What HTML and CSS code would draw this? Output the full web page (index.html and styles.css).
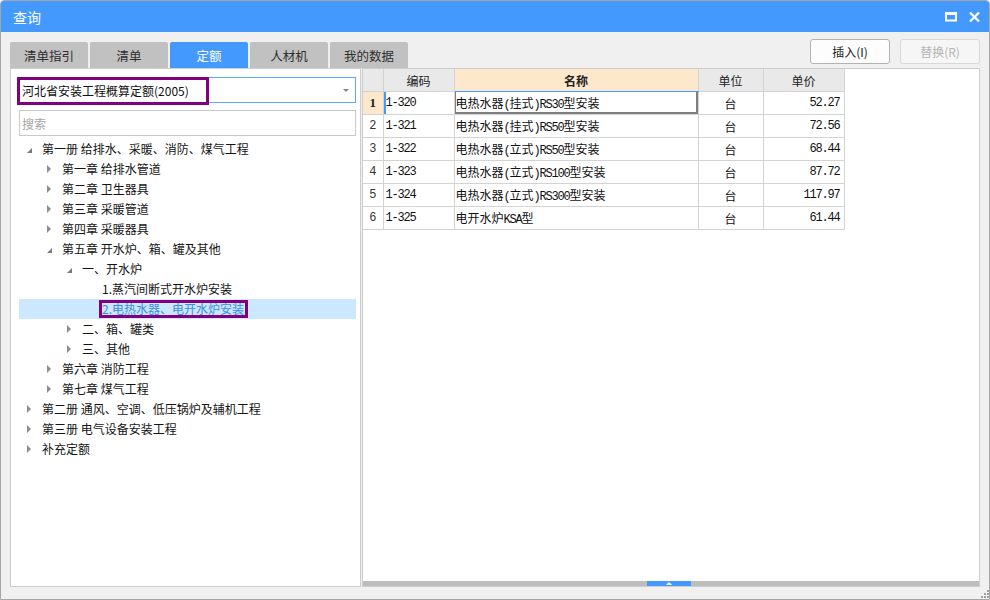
FILE: index.html
```html
<!DOCTYPE html>
<html lang="zh-CN">
<head>
<meta charset="utf-8">
<title>查询</title>
<link rel="stylesheet" href="styles.css">
</head>
<body>
<div class="window">
  <div class="titlebar">
    <span class="title">查询</span>
    <div class="wbtns">
      <svg class="ico-max" width="12" height="10" viewBox="0 0 12 10"><rect x="1" y="1.5" width="10" height="7" fill="none" stroke="#fff" stroke-width="2"/><rect x="0" y="0" width="12" height="3" fill="#fff"/></svg>
      <svg class="ico-close" width="11" height="10" viewBox="0 0 11 10"><path d="M1 0.5 L10 9.5 M10 0.5 L1 9.5" stroke="#fff" stroke-width="2.2" fill="none"/></svg>
    </div>
  </div>

  <div class="toolbar">
    <div class="tabs">
      <div class="tab">清单指引</div>
      <div class="tab">清单</div>
      <div class="tab active">定额</div>
      <div class="tab">人材机</div>
      <div class="tab">我的数据</div>
    </div>
    <div class="actions">
      <button class="btn">插入(I)</button>
      <button class="btn disabled">替换(R)</button>
    </div>
  </div>

  <div class="panels">
    <div class="left">
      <div class="combo">
        <span class="combo-text">河北省安装工程概算定额(2005)</span>
        <span class="combo-arrow"></span>
      </div>
      <div class="search">搜索</div>
      <div class="tree">
        <div class="node l0"><span class="tw exp"></span><span class="tx">第一册 给排水、采暖、消防、煤气工程</span></div>
        <div class="node l1"><span class="tw col"></span><span class="tx">第一章 给排水管道</span></div>
        <div class="node l1"><span class="tw col"></span><span class="tx">第二章 卫生器具</span></div>
        <div class="node l1"><span class="tw col"></span><span class="tx">第三章 采暖管道</span></div>
        <div class="node l1"><span class="tw col"></span><span class="tx">第四章 采暖器具</span></div>
        <div class="node l1"><span class="tw exp"></span><span class="tx">第五章 开水炉、箱、罐及其他</span></div>
        <div class="node l2"><span class="tw exp"></span><span class="tx">一、开水炉</span></div>
        <div class="node l3"><span class="tw"></span><span class="tx">1.蒸汽间断式开水炉安装</span></div>
        <div class="node l3 sel"><span class="tw"></span><span class="tx mark">2.电热水器、电开水炉安装</span></div>
        <div class="node l2"><span class="tw col"></span><span class="tx">二、箱、罐类</span></div>
        <div class="node l2"><span class="tw col"></span><span class="tx">三、其他</span></div>
        <div class="node l1"><span class="tw col"></span><span class="tx">第六章 消防工程</span></div>
        <div class="node l1"><span class="tw col"></span><span class="tx">第七章 煤气工程</span></div>
        <div class="node l0"><span class="tw col"></span><span class="tx">第二册 通风、空调、低压锅炉及辅机工程</span></div>
        <div class="node l0"><span class="tw col"></span><span class="tx">第三册 电气设备安装工程</span></div>
        <div class="node l0"><span class="tw col"></span><span class="tx">补充定额</span></div>
      </div>
    </div>

    <div class="right">
      <div class="grid-area">
        <table class="grid">
          <colgroup>
            <col class="c-no"><col class="c-code"><col class="c-name"><col class="c-unit"><col class="c-price">
          </colgroup>
          <thead>
            <tr><th></th><th>编码</th><th class="hl">名称</th><th>单位</th><th>单价</th></tr>
          </thead>
          <tbody>
            <tr class="cur"><td class="no">1</td><td class="code">1-320</td><td class="name">电热水器<span class="m">(</span>挂式<span class="m">)RS30</span>型安装</td><td class="unit">台</td><td class="price">52.27</td></tr>
            <tr><td class="no">2</td><td class="code">1-321</td><td class="name">电热水器<span class="m">(</span>挂式<span class="m">)RS50</span>型安装</td><td class="unit">台</td><td class="price">72.56</td></tr>
            <tr><td class="no">3</td><td class="code">1-322</td><td class="name">电热水器<span class="m">(</span>立式<span class="m">)RS50</span>型安装</td><td class="unit">台</td><td class="price">68.44</td></tr>
            <tr><td class="no">4</td><td class="code">1-323</td><td class="name">电热水器<span class="m">(</span>立式<span class="m">)RS100</span>型安装</td><td class="unit">台</td><td class="price">87.72</td></tr>
            <tr><td class="no">5</td><td class="code">1-324</td><td class="name">电热水器<span class="m">(</span>立式<span class="m">)RS300</span>型安装</td><td class="unit">台</td><td class="price">117.97</td></tr>
            <tr><td class="no">6</td><td class="code">1-325</td><td class="name">电开水炉<span class="m">KSA</span>型</td><td class="unit">台</td><td class="price">61.44</td></tr>
          </tbody>
        </table>
      </div>
      <div class="hscroll"><div class="thumb"><span class="thumb-arrow"></span></div></div>
    </div>
  </div>

  <div class="footer">
    <svg class="grip" width="8" height="8" viewBox="0 0 8 8"><g fill="#a0a0a0"><rect x="6" y="0" width="2" height="2"/><rect x="3" y="3" width="2" height="2"/><rect x="6" y="3" width="2" height="2"/><rect x="0" y="6" width="2" height="2"/><rect x="3" y="6" width="2" height="2"/><rect x="6" y="6" width="2" height="2"/></g></svg>
  </div>
</div>
</body>
</html>
```

FILE: styles.css
```css
html, body {
  margin: 0;
  padding: 0;
  background: #ffffff;
}

.window {
  width: 990px;
  height: 600px;
  box-sizing: border-box;
  border: 1px solid #a6a6a6;
  border-radius: 4px 4px 0 0;
  background: #f0f0f0;
  display: flex;
  flex-direction: column;
  overflow: hidden;
  font-family: "Noto Sans CJK SC", "Noto Sans", sans-serif;
  font-size: 12px;
  color: #1e1e1e;
}

/* title bar */
.titlebar {
  height: 31px;
  flex: none;
  background: #4499ff;
  display: flex;
  align-items: center;
  justify-content: space-between;
  padding: 0 9px 0 12px;
  color: #ffffff;
}

.title {
  font-size: 14px;
  line-height: 16px;
  margin-top: 1px;
}

.wbtns {
  display: flex;
  align-items: center;
  gap: 12px;
  margin-top: 1px;
}

/* toolbar */
.toolbar {
  height: 36px;
  flex: none;
  display: flex;
  justify-content: space-between;
  padding: 0 9px;
}

.tabs {
  display: flex;
  gap: 2px;
  align-self: flex-end;
}

.tab {
  width: 78px;
  height: 26px;
  display: flex;
  align-items: center;
  justify-content: center;
  background: #c1c1c1;
  border-radius: 2px 2px 0 0;
  color: #2e2e2e;
  font-size: 12.5px;
}

.tab.active {
  background: #4499ff;
  color: #ffffff;
}

.actions {
  display: flex;
  gap: 10px;
  margin-top: 7px;
  align-self: flex-start;
}

.btn {
  width: 80px;
  height: 25px;
  box-sizing: border-box;
  border: 1px solid #b3b3b3;
  border-radius: 3px;
  background: #fdfdfd;
  font-family: "Noto Sans CJK SC", "Noto Sans", sans-serif;
  font-size: 12px;
  color: #222222;
  padding: 0;
}

.btn.disabled {
  border-color: #d9d9d9;
  background: #f6f6f6;
  color: #b5b5b5;
}

/* panels */
.panels {
  height: 519px;
  flex: none;
  display: flex;
  gap: 1px;
  padding: 0 9px;
}

.left {
  width: 351px;
  flex: none;
  box-sizing: border-box;
  border: 1px solid #cdcdcd;
  background: #ffffff;
  padding: 8px 4px 0 7px;
}

.combo {
  height: 26px;
  box-sizing: border-box;
  border: 1px solid #5fa8f5;
  display: flex;
  align-items: center;
}

.combo-text {
  width: 192px;
  height: 28px;
  box-sizing: border-box;
  border: 3px solid #800080;
  margin-left: -2px;
  margin-top: 1px;
  padding-left: 2px;
  display: flex;
  align-items: center;
  color: #111111;
  font-size: 12px;
}

.combo-arrow {
  margin-left: auto;
  margin-right: 6px;
  width: 0;
  height: 0;
  border-left: 3px solid transparent;
  border-right: 3px solid transparent;
  border-top: 3px solid #888888;
}

.search {
  height: 26px;
  box-sizing: border-box;
  border: 1px solid #c9c9c9;
  margin: 7px 0 0 1px;
  padding-left: 2px;
  display: flex;
  align-items: center;
  color: #a6a6a6;
}

.tree {
  margin: 3px 0 0 1px;
}

.node {
  height: 20px;
  display: flex;
  align-items: center;
  white-space: nowrap;
}

.l0 { padding-left: 0; }
.l1 { padding-left: 20px; }
.l2 { padding-left: 40px; }
.l3 { padding-left: 60px; }

.tw {
  width: 23px;
  height: 20px;
  flex: none;
  display: flex;
  align-items: center;
}

.tw.exp::before {
  content: "";
  margin-left: 8px;
  margin-top: 3px;
  width: 0;
  height: 0;
  border-left: 5px solid transparent;
  border-bottom: 5px solid #7a7a7a;
}

.tw.col::before {
  content: "";
  margin-left: 8px;
  width: 0;
  height: 0;
  border-top: 4px solid transparent;
  border-bottom: 4px solid transparent;
  border-left: 4px solid #8c8c8c;
}

.tx {
  color: #141414;
  line-height: 20px;
}

.node.sel {
  background: #cce8ff;
}

.tx.mark {
  color: #3a8ceb;
  height: 18px;
  box-sizing: border-box;
  border: 3px solid #800080;
  margin-left: -3px;
  padding-right: 1px;
  line-height: 12px;
  display: flex;
  align-items: center;
}

/* right panel */
.right {
  flex: 1;
  box-sizing: border-box;
  border: 1px solid #cdcdcd;
  background: #ffffff;
  display: flex;
  flex-direction: column;
}

.grid-area {
  flex: 1;
}

.grid {
  border-collapse: collapse;
  table-layout: fixed;
  width: 481px;
}

.c-no { width: 20px; }
.c-code { width: 71px; }
.c-name { width: 244px; }
.c-unit { width: 65px; }
.c-price { width: 81px; }

.grid th,
.grid td {
  border: 1px solid #d3d3d3;
  height: 22px;
  padding: 0;
  white-space: nowrap;
  overflow: hidden;
}

.grid thead th {
  border-top: none;
  background: #e9e9e9;
  font-weight: normal;
  color: #222222;
  font-size: 12px;
  text-align: center;
}

.grid th:first-child,
.grid td:first-child {
  border-left: none;
}

.grid thead th.hl {
  background: #fde8cc;
  font-weight: bold;
  border-bottom: 1px solid #4499ff;
}

.grid td {
  color: #111111;
  font-size: 12px;
}

.grid td.no {
  text-align: center;
  font-family: "Liberation Mono", monospace;
  font-size: 12px;
  color: #333333;
}

.grid tr.cur td.no {
  background: #fde8cc;
  font-family: "Liberation Serif", serif;
  font-weight: bold;
  font-size: 13px;
  color: #222222;
}

.grid td.code {
  padding-left: 2px;
  font-family: "Liberation Mono", monospace;
  font-size: 12px;
  letter-spacing: -1.2px;
}

.grid tr.cur td.code {
  box-shadow: inset 2px 0 0 #4499ff;
}

.grid td.name {
  padding-left: 1px;
}

.grid tr.cur td.name {
  box-shadow: inset -2px -2px 0 #7f7f7f, inset 1px 0 0 #7f7f7f;
}

.m {
  font-family: "Liberation Mono", monospace;
  font-size: 12px;
  letter-spacing: -1.2px;
}

.grid td.unit {
  text-align: center;
}

.grid td.price {
  text-align: right;
  padding-right: 4px;
  font-family: "Liberation Mono", monospace;
  font-size: 12px;
  letter-spacing: -1.2px;
}

.hscroll {
  height: 5px;
  flex: none;
  background: #bdbdbd;
  display: flex;
  justify-content: center;
}

.thumb {
  width: 44px;
  height: 5px;
  background: #4499ff;
  display: flex;
  align-items: center;
  justify-content: center;
  margin-right: 4px;
}

.thumb-arrow {
  width: 0;
  height: 0;
  border-left: 3px solid transparent;
  border-right: 3px solid transparent;
  border-bottom: 3px solid #ffffff;
}

/* footer */
.footer {
  flex: 1;
  display: flex;
  justify-content: flex-end;
  align-items: flex-end;
  padding: 0 0 1px 0;
}

.grip {
  display: block;
}
```
